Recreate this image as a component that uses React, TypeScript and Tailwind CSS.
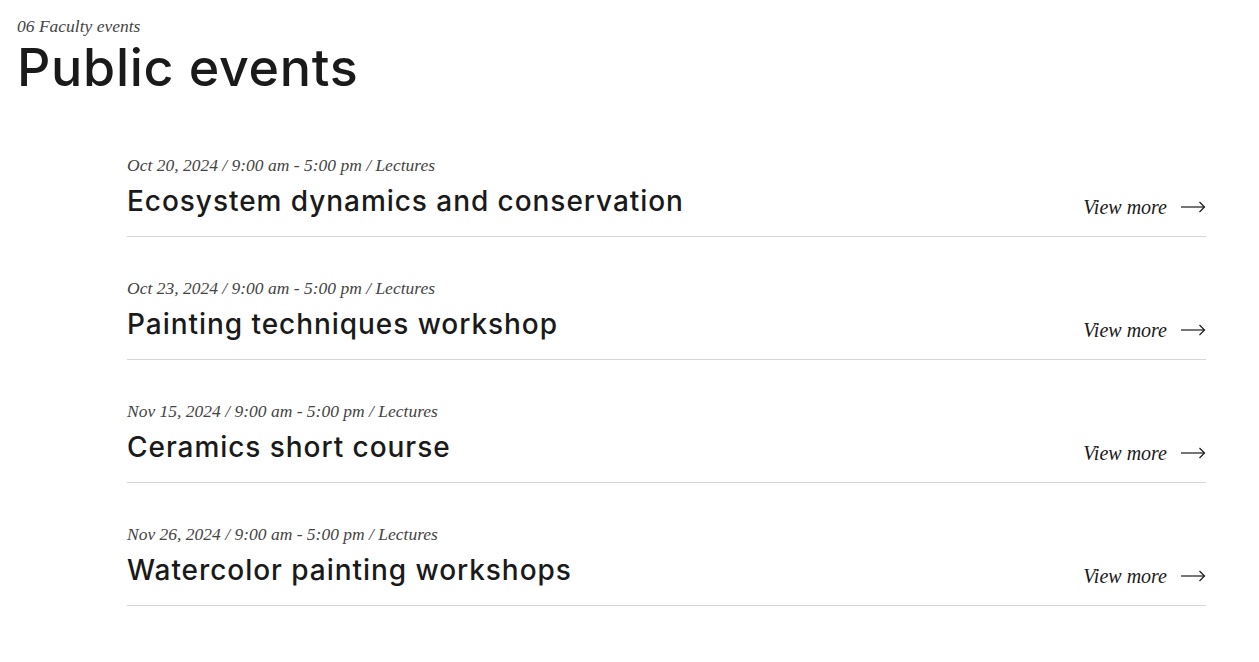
const EVENTS = [
  { date: 'Oct 20, 2024', title: 'Ecosystem dynamics and conservation' },
  { date: 'Oct 23, 2024', title: 'Painting techniques workshop' },
  { date: 'Nov 15, 2024', title: 'Ceramics short course' },
  { date: 'Nov 26, 2024', title: 'Watercolor painting workshops' },
]

const serif = "font-['Liberation_Serif',serif] italic"
const sans = "font-['Inter',sans-serif]"

function Arrow() {
  return (
    <svg width="25" height="12" viewBox="0 0 25 12" fill="none" stroke="#1a1a1a" strokeWidth="1.2">
      <path d="M0 6h23.5" />
      <path d="M18.5 1l5 5-5 5" />
    </svg>
  )
}

export default function App() {
  return (
    <div className="min-h-screen bg-white text-[#1a1a1a]">
      {/* Section heading */}
      <div className="px-[17px] pt-[15px]">
        <p className={`${serif} text-[17.5px] leading-[22px] text-[#444]`}>06 Faculty events</p>
        <h1 className={`${sans} text-[52px] leading-[56px] font-medium tracking-[0.7px] mt-[3px]`}>Public events</h1>
      </div>

      {/* Event list */}
      <div className="pl-[127px] pr-[53px] pt-[58px]">
        {EVENTS.map((e) => (
          <div key={e.title} className="flex items-end justify-between border-b border-[#d6d6d6] pb-[17px] mb-[40px]">
            <div>
              <p className={`${serif} text-[17.5px] leading-[22px] text-[#444]`}>
                {e.date} / 9:00 am - 5:00 pm / Lectures
              </p>
              <h3 className={`${sans} text-[28px] leading-[36px] font-medium tracking-[0.95px] mt-[7px]`}>{e.title}</h3>
            </div>
            <a href="#" className="flex items-center gap-[14px]">
              <span className={`${serif} text-[20px] leading-[24px]`}>View more</span>
              <Arrow />
            </a>
          </div>
        ))}
      </div>
    </div>
  )
}
